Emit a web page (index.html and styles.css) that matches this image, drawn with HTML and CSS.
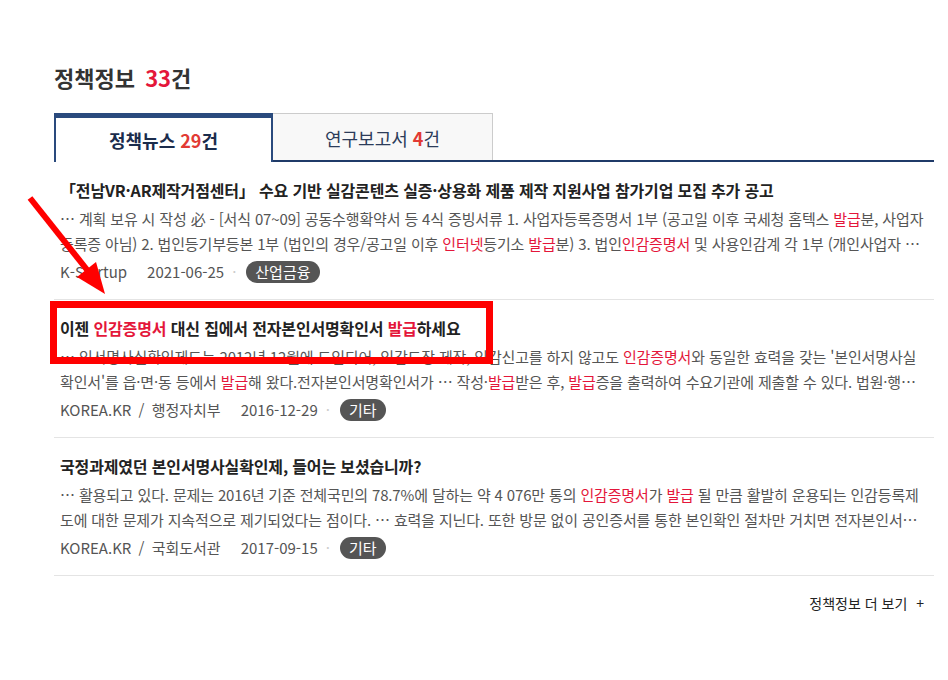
FILE: index.html
```html
<!DOCTYPE html>
<html lang="ko">
<head>
    <meta charset="UTF-8">
    <meta name="viewport" content="width=device-width, initial-scale=1.0">
    <title>정책정보</title>
    <link rel="stylesheet" href="styles.css">
</head>
<body>

    <!-- Policy info section -->
    <div class="policy">
        <h2 class="policy-title">정책정보 <em>33</em>건</h2>

        <!-- Tabs -->
        <div class="tabs">
            <a href="#" class="tab active"><span>정책뉴스 <em>29</em>건</span></a>
            <a href="#" class="tab"><span>연구보고서 <em>4</em>건</span></a>
        </div>

        <!-- News list -->
        <ul class="news-list">
            <li class="news-item">
                <div class="news-title">「전남VR·AR제작거점센터」 수요 기반 실감콘텐츠 실증·상용화 제품 제작 지원사업 참가기업 모집 추가 공고</div>
                <div class="news-desc">
                    <span class="line">… 계획 보유 시 작성 必 - [서식 07~09] 공동수행확약서 등 4식 증빙서류 1. 사업자등록증명서 1부 (공고일 이후 국세청 홈텍스 <b>발급</b>분, 사업자</span>
                    <span class="line">등록증 아님) 2. 법인등기부등본 1부 (법인의 경우/공고일 이후 <b>인터넷</b>등기소 <b>발급</b>분) 3. 법인<b>인감증명서</b> 및 사용인감계 각 1부 (개인사업자 및 비영리법인의 경우)</span>
                </div>
                <div class="news-meta">
                    <span class="source">K-Startup</span>
                    <span class="date">2021-06-25</span>
                    <span class="badge">산업금융</span>
                </div>
            </li>
            <li class="news-item">
                <div class="news-title">이젠 <b>인감증명서</b> 대신 집에서 전자본인서명확인서 <b>발급</b>하세요</div>
                <div class="news-desc">
                    <span class="line">… 인서명사실확인제도는 2012년 12월에 도입되어, 인감도장 제작, 인감신고를 하지 않고도 <b>인감증명서</b>와 동일한 효력을 갖는 '본인서명사실</span>
                    <span class="line">확인서'를 읍·면·동 등에서 <b>발급</b>해 왔다.전자본인서명확인서가 … 작성·<b>발급</b>받은 후, <b>발급</b>증을 출력하여 수요기관에 제출할 수 있다. 법원·행정기관 등</span>
                </div>
                <div class="news-meta">
                    <span class="source">KOREA.KR / 행정자치부</span>
                    <span class="date">2016-12-29</span>
                    <span class="badge">기타</span>
                </div>
            </li>
            <li class="news-item">
                <div class="news-title">국정과제였던 본인서명사실확인제, 들어는 보셨습니까?</div>
                <div class="news-desc">
                    <span class="line">… 활용되고 있다. 문제는 2016년 기준 전체국민의 78.7%에 달하는 약 4 076만 통의 <b>인감증명서</b>가 <b>발급</b> 될 만큼 활발히 운용되는 인감등록제</span>
                    <span class="line">도에 대한 문제가 지속적으로 제기되었다는 점이다. … 효력을 지닌다. 또한 방문 없이 공인증서를 통한 본인확인 절차만 거치면 전자본인서명확인서를</span>
                </div>
                <div class="news-meta">
                    <span class="source">KOREA.KR / 국회도서관</span>
                    <span class="date">2017-09-15</span>
                    <span class="badge">기타</span>
                </div>
            </li>
        </ul>

        <div class="more">
            <a href="#">정책정보 더 보기 <span class="plus">+</span></a>
        </div>
    </div>

    <!-- Annotation overlay (arrow + highlight box) -->
    <div class="mark-box"></div>
    <svg class="mark-arrow" width="948" height="680" viewBox="0 0 948 680">
        <line x1="30" y1="198" x2="88" y2="271" stroke="#ff0000" stroke-width="6"/>
        <polygon points="105,294 96,262 77,277" fill="#ff0000"/>
    </svg>

</body>
</html>
```

FILE: styles.css
```css
body, html {
    margin: 0;
    padding: 0;
    background: #fff;
}

body {
    font-family: "Noto Sans CJK KR", "Noto Sans", sans-serif;
    color: #333;
    position: relative;
    height: 680px;
    overflow: hidden;
}

a {
    text-decoration: none;
    color: inherit;
}

.policy {
    width: 880px;
    margin-left: 54px;
    padding-top: 61px;
}

.policy-title {
    margin: 0;
    font-size: 22px;
    line-height: 32px;
    font-weight: bold;
    color: #333;
}

.policy-title em {
    font-style: normal;
    color: #e4163a;
    margin-left: 4px;
}

/* tabs */
.tabs {
    display: flex;
    margin-top: 20px;
    border-bottom: 2px solid #1f3a68;
}

.tab {
    box-sizing: border-box;
    width: 220px;
    height: 47px;
    display: flex;
    align-items: center;
    justify-content: center;
    font-size: 18px;
    color: #2c3c5a;
    background: #f8f8f8;
    border: 1px solid #cccccc;
    border-bottom: none;
    border-left: none;
    padding-top: 2px;
}

.tab.active {
    width: 219px;
    background: #fff;
    border: 2px solid #2a4a7d;
    border-top: 5px solid #2a4a7d;
    border-bottom: none;
    font-weight: bold;
    color: #1b2c4c;
    margin-bottom: -2px;
    height: 49px;
    padding-top: 0;
}

.tab em {
    font-style: normal;
    font-weight: bold;
    color: #e23a34;
}

/* list */
.news-list {
    list-style: none;
    margin: 0;
    padding: 0;
}

.news-item {
    padding: 17px 0 16px 6px;
    border-bottom: 1px solid #e4e4e4;
}

.news-title {
    font-size: 16px;
    line-height: 22px;
    font-weight: bold;
    color: #222;
    letter-spacing: -0.15px;
}

.news-title b,
.news-desc b {
    color: #e4163a;
    font-weight: normal;
}

.news-title b {
    font-weight: bold;
}

.news-desc {
    margin-top: 5px;
    font-size: 15px;
    line-height: 25px;
    color: #555;
    letter-spacing: -0.15px;
}

.news-desc .line {
    display: block;
    white-space: nowrap;
    overflow: hidden;
    text-overflow: ellipsis;
    width: 866px;
}

.news-meta {
    margin-top: 5px;
    display: flex;
    align-items: center;
    font-size: 15px;
    line-height: 22px;
    color: #555;
}

.source {
    margin-right: 20px;
    word-spacing: 3px;
}

.date::after {
    content: "·";
    color: #ccc;
    margin: 0 10px 0 8px;
}

.badge {
    background: #555;
    color: #fff;
    border-radius: 11px;
    padding: 0 9px;
    line-height: 22px;
    font-size: 15px;
}

.more {
    text-align: right;
    padding: 16px 10px 0 0;
    font-size: 14px;
    line-height: 22px;
    color: #222;
}

.more .plus {
    margin-left: 5px;
}

/* annotation overlay */
.mark-box {
    position: absolute;
    left: 50px;
    top: 301px;
    width: 429px;
    height: 49px;
    border: 7px solid #ff0000;
}

.mark-arrow {
    position: absolute;
    left: 0;
    top: 0;
}
```
